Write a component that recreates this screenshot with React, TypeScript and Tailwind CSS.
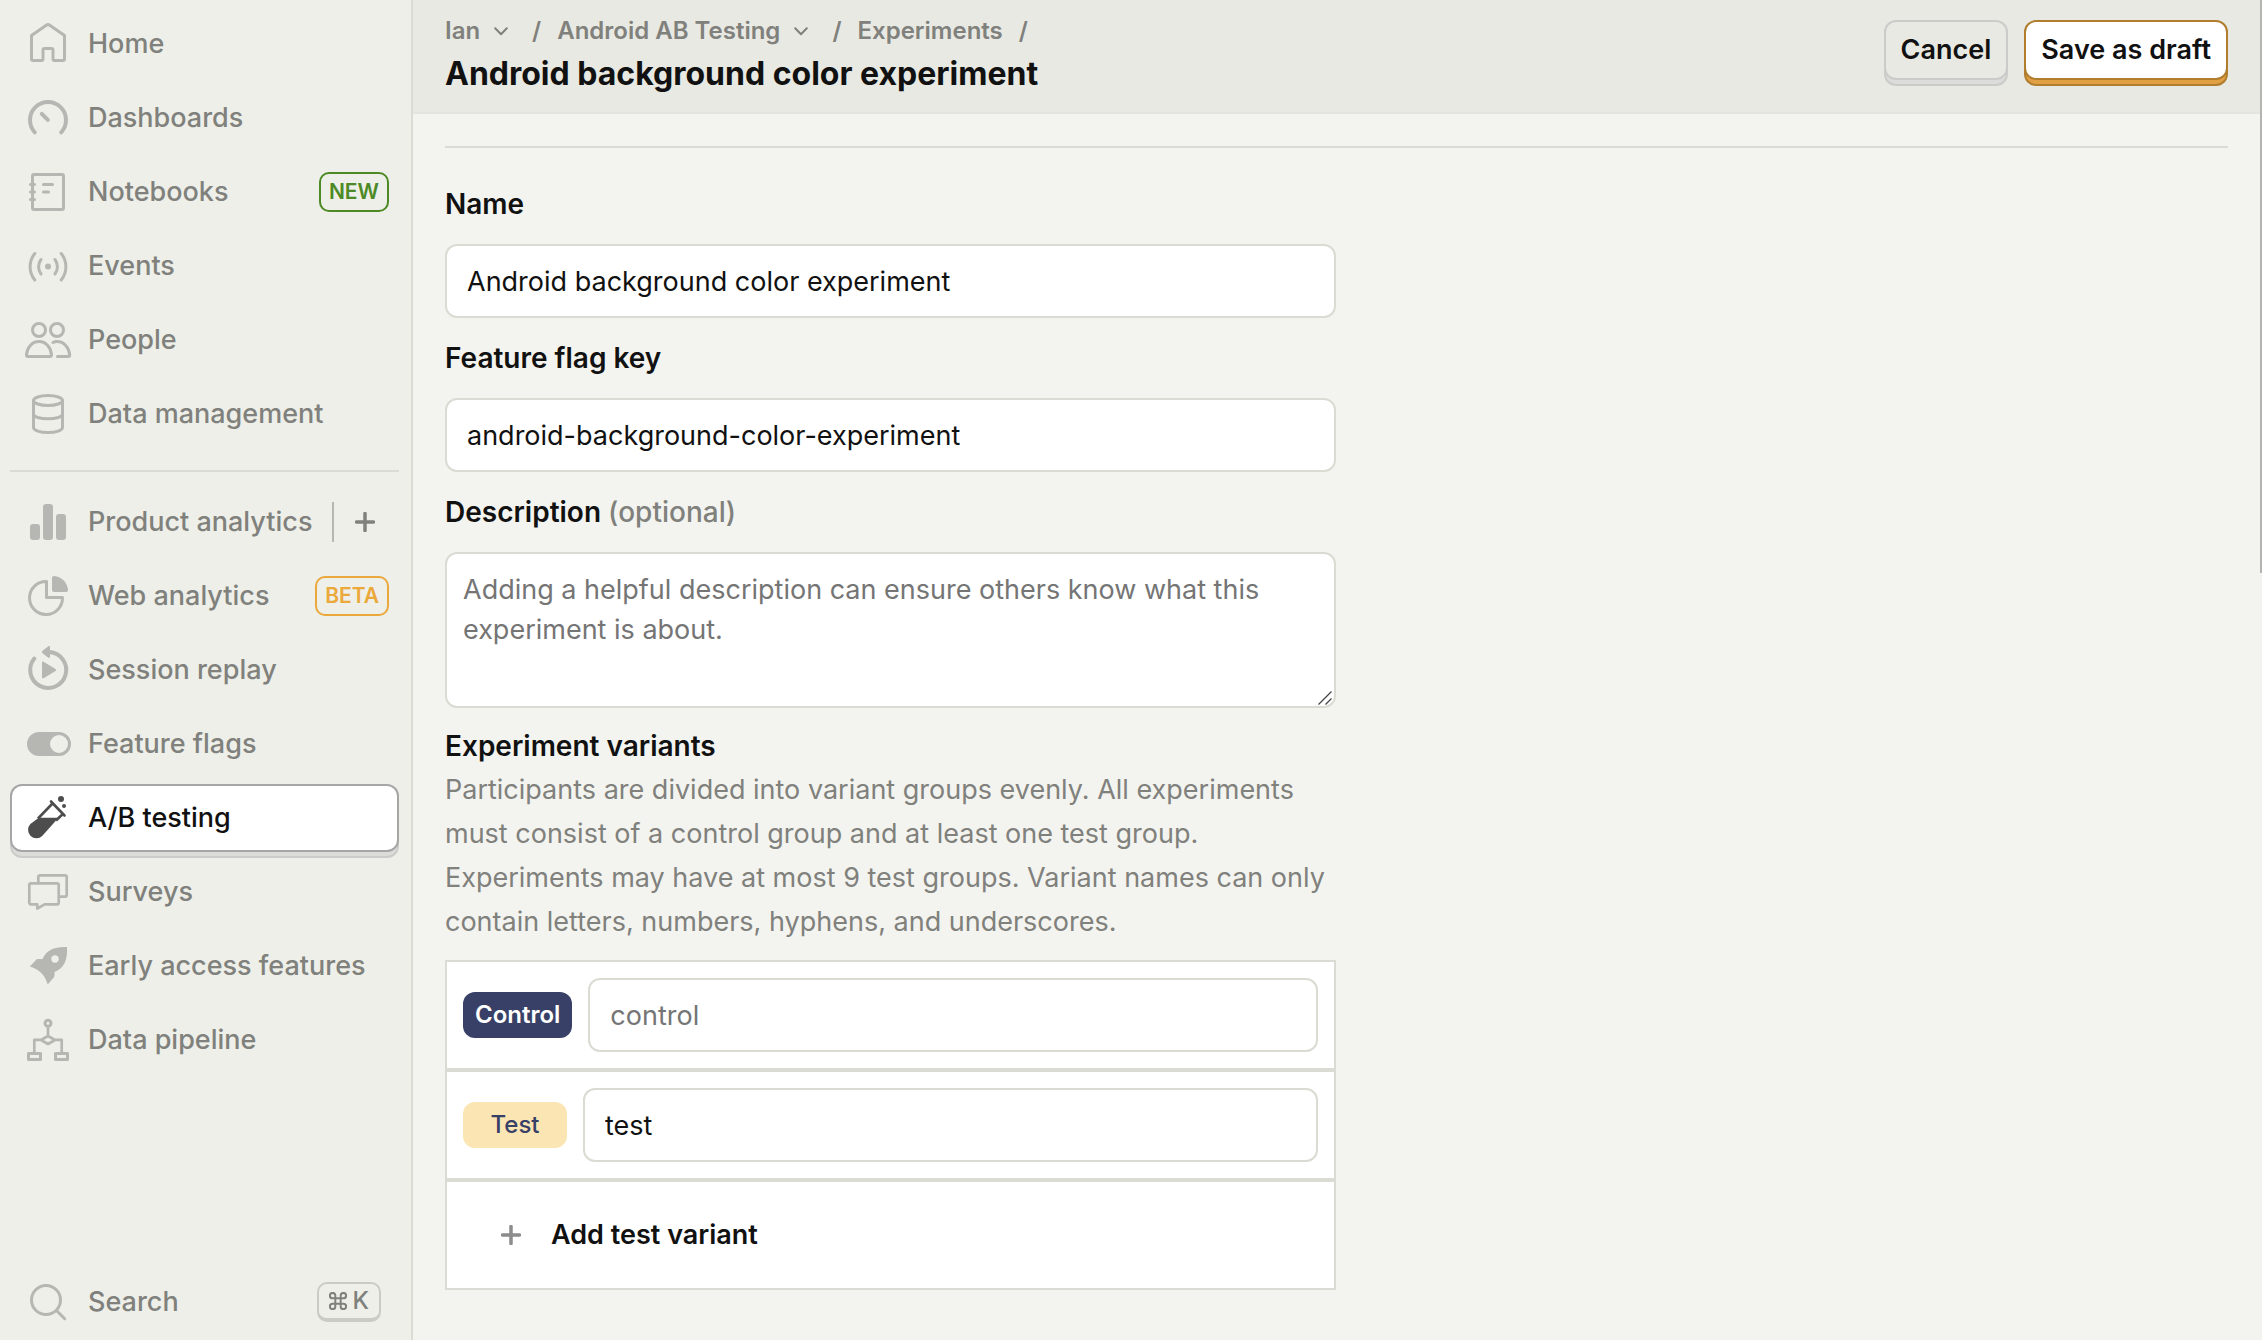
import React from "react";

type IconProps = { children: React.ReactNode };

function NavIcon({ children }: IconProps) {
  return (
    <svg
      viewBox="0 0 48 48"
      className="size-12 shrink-0"
      fill="none"
      stroke="currentColor"
      strokeWidth="3"
      strokeLinecap="round"
      strokeLinejoin="round"
      aria-hidden="true"
    >
      {children}
    </svg>
  );
}

const icons = {
  home: (
    <NavIcon>
      <path d="M7.5 15.5 22.6 5a2.4 2.4 0 0 1 2.8 0L40.5 15.5V39a1.500 1.500 0 0 1-1.5 1.5h-8.5a1.500 1.500 0 0 1-1.5-1.5v-9a1.500 1.500 0 0 0-1.5-1.5h-7a1.500 1.500 0 0 0-1.5 1.5v9a1.500 1.500 0 0 1-1.5 1.5H9A1.500 1.500 0 0 1 7.5 39z" />
    </NavIcon>
  ),
  dashboards: (
    <NavIcon>
      <path strokeWidth="4" d="M10.8 38.3a18 18 0 1 1 26.4 0M17.8 19.8l6 6" />
    </NavIcon>
  ),
  notebooks: (
    <NavIcon>
      <rect x="8.5" y="6.5" width="31" height="35" rx="1.5" />
      <path d="M6.5 16.5h4M6.5 24h4M6.5 31.5h4M19.5 16.5h9M19.5 24h5" />
    </NavIcon>
  ),
  events: (
    <NavIcon>
      <circle cx="24" cy="24.5" r="3" fill="currentColor" stroke="none" />
      <path d="M17 17.5a12 12 0 0 0 0 14.5M31 17.5a12 12 0 0 1 0 14.5M10.8 11.5a21 21 0 0 0 0 26.5M37.2 11.5a21 21 0 0 1 0 26.5" />
    </NavIcon>
  ),
  people: (
    <NavIcon>
      <circle cx="15" cy="14" r="6.5" />
      <circle cx="33" cy="14" r="6.5" />
      <path d="M2.5 38.800C3 31.5 8 25.5 15 25.5s12 6 12.5 13.3c0 1-.5 1.7-1.5 1.7H4c-1 0-1.5-.7-1.5-1.700zM29 26.5c1-.6 2.5-1 4-1 7 0 12 6 12.7 13.3 0 1-.5 1.7-1.5 1.7H33.5" />
    </NavIcon>
  ),
  database: (
    <NavIcon>
      <ellipse cx="24" cy="10.5" rx="14.5" ry="5" />
      <path d="M9.5 10.5v27c0 2.8 6.5 5 14.5 5s14.5-2.2 14.5-5v-27M9.5 24c0 2.8 6.5 4.8 14.5 4.8S38.5 26.8 38.5 24" />
    </NavIcon>
  ),
  bars: (
    <NavIcon>
      <g fill="currentColor" stroke="none">
        <rect x="6" y="26" width="10" height="16" rx="3" />
        <rect x="19" y="6" width="10" height="36" rx="3" />
        <rect x="32" y="16" width="10" height="26" rx="3" />
      </g>
    </NavIcon>
  ),
  pie: (
    <NavIcon>
      <path d="M22.5 9.5a16.5 16.5 0 1 0 16 16h-16z" />
      <path
        fill="currentColor"
        stroke="none"
        d="M28 6c0-1.3 1-2.2 2.3-2 7.4.8 12.9 6.3 13.7 13.7.1 1.3-.7 2.3-2 2.3H30a2 2 0 0 1-2-2z"
      />
    </NavIcon>
  ),
  replay: (
    <NavIcon>
      <path strokeWidth="4" d="M25.5 6A18 18 0 1 1 10.3 12.5" />
      <path
        fill="currentColor"
        stroke="none"
        d="M18.5 4.800 24 .4c.9-.7 2-.3 2 .8v9.600c0 1.100-1.100 1.500-2 .8l-5.500-4.400c-.8-.7-.8-1.700 0-2.400zM18 16.700c0-1 .7-1.400 1.500-1l12 7.200c.8.5.8 1.700 0 2.200l-12 7.200c-.8.4-1.500 0-1.500-1z"
      />
    </NavIcon>
  ),
  toggle: (
    <NavIcon>
      <path
        fill="currentColor"
        stroke="none"
        fillRule="evenodd"
        d="M15 12h20a12 12 0 0 1 0 24H15a12 12 0 0 1 0-24zm20 3a9 9 0 1 0 0 18 9 9 0 0 0 0-18z"
      />
    </NavIcon>
  ),
  tube: (
    <NavIcon>
      <path strokeWidth="2.6" d="m27 7.5 13.5 14" />
      <path strokeWidth="2.6" strokeLinecap="butt" d="M28.5 9.5 14 24.500M38.800 20 32 26.500" />
      <path
        fill="currentColor"
        stroke="none"
        d="M14.700 23.700H34.500L18.400 41.700a8.300 8.300 0 0 1-12-11.600z"
      />
      <circle cx="37" cy="5" r="3" fill="currentColor" stroke="none" />
      <circle cx="40" cy="12" r="2" fill="currentColor" stroke="none" />
    </NavIcon>
  ),
  surveys: (
    <NavIcon>
      <path
        strokeWidth="2.7"
        d="M14.3 15V9a1.700 1.700 0 0 1 1.700-1.700h25A1.700 1.700 0 0 1 42.700 9v18a1.700 1.700 0 0 1-1.700 1.700h-5.500M7 15.300h26a1.700 1.700 0 0 1 1.700 1.700v17.700a1.700 1.700 0 0 1-1.700 1.700H20.500l-7.200 4.200v-4.200H7a1.700 1.700 0 0 1-1.700-1.700V17A1.700 1.700 0 0 1 7 15.300z"
      />
    </NavIcon>
  ),
  rocket: (
    <NavIcon>
      <path
        fill="currentColor"
        stroke="none"
        fillRule="evenodd"
        d="M43 5c.3 10-.5 20-12.500 25 .1 2 0 4-.5 5.300L23.700 42.500c-1-3.500-2-5.500-3.600-8-2-3-3.600-4.500-6.500-6.500-2.500-1.600-4.600-2.500-7.800-3.500L12.700 17.300c1.500-.3 3.600-.3 5.600 0C22.500 7.500 31 4.500 43 5zM31 13.300a3.700 3.700 0 1 0 0 7.400 3.700 3.700 0 0 0 0-7.400z"
      />
    </NavIcon>
  ),
  pipeline: (
    <NavIcon>
      <circle cx="24" cy="7.3" r="3" />
      <path
        strokeWidth="2.7"
        d="M24 11v8.500M24 20l7 4-7 4-7-4zM17 23.800h-6.700V36M31 23.800h6.700V36"
      />
      <rect x="4.5" y="37.5" width="12" height="6" />
      <rect x="31.5" y="37.5" width="12" height="6" />
    </NavIcon>
  ),
  search: (
    <NavIcon>
      <circle cx="22" cy="22" r="14.5" />
      <path d="m32.7 32.7 8 8" />
    </NavIcon>
  ),
};

type NavItemProps = {
  icon: React.ReactNode;
  label: string;
  active?: boolean;
  children?: React.ReactNode;
};

function NavItem({ icon, label, active, children }: NavItemProps) {
  return (
    <li
      className={
        active
          ? "flex h-[68px] items-center rounded-xl border-2 border-[#a6a6a6] bg-white pr-2 pl-3 text-[#111] shadow-[0_6px_0_-2px_#dcdcdb,0_6px_0_0_#cbcbc9]"
          : "flex h-[68px] items-center rounded-xl border-2 border-transparent pr-2 pl-3 text-[#80817c]"
      }
    >
      <a href="#" className="flex min-w-0 items-center gap-4" aria-current={active ? "page" : undefined}>
        <span className={active ? "text-[#4d4d4d]" : "text-[#b6b7b2]"}>{icon}</span>
        <span className="whitespace-nowrap">{label}</span>
      </a>
      {children}
    </li>
  );
}

function PlusIcon({ className }: { className: string }) {
  return (
    <svg viewBox="0 0 20 20" className={className} stroke="currentColor" strokeWidth="3.5" strokeLinecap="round" aria-hidden="true">
      <path d="M10 1.5v17M1.5 10h17" />
    </svg>
  );
}

function Chevron() {
  return (
    <svg viewBox="0 0 14 9" className="h-[9px] w-[14px]" fill="none" stroke="currentColor" strokeWidth="2" strokeLinecap="round" strokeLinejoin="round" aria-hidden="true">
      <path d="m1.2 1.2 5.800 6 5.800-6" />
    </svg>
  );
}

function Sidebar() {
  return (
    <nav className="flex w-[413px] shrink-0 flex-col border-r-2 border-[#dadbd2] bg-[#eeefe9] pt-[10px] pr-3 pb-1 pl-[10px] text-[27px] leading-10 font-medium">
      <ul className="flex flex-col gap-1.5">
        <NavItem icon={icons.home} label="Home" />
        <NavItem icon={icons.dashboards} label="Dashboards" />
        <NavItem icon={icons.notebooks} label="Notebooks">
          <span className="ml-auto flex h-10 items-center rounded-[10px] border-2 border-[#4d8a26] px-2 text-[21px] font-semibold text-[#4d8a26]">
            NEW
          </span>
        </NavItem>
        <NavItem icon={icons.events} label="Events" />
        <NavItem icon={icons.people} label="People" />
        <NavItem icon={icons.database} label="Data management" />
      </ul>
      <hr className="mt-[22px] mb-4 border-t-2 border-[#dadbd2]" />
      <ul className="flex flex-col gap-1.5">
        <NavItem icon={icons.bars} label="Product analytics">
          <span className="ml-5 h-10 w-0.5 shrink-0 bg-[#b6b7b2]" />
          <button type="button" aria-label="New insight" className="ml-auto p-3.5">
            <PlusIcon className="size-5" />
          </button>
        </NavItem>
        <NavItem icon={icons.pie} label="Web analytics">
          <span className="ml-auto flex h-10 items-center rounded-[10px] border-2 border-[#eba83b] px-2 text-[21px] font-semibold text-[#eba83b]">
            BETA
          </span>
        </NavItem>
        <NavItem icon={icons.replay} label="Session replay" />
        <NavItem icon={icons.toggle} label="Feature flags" />
        <NavItem icon={icons.tube} label="A/B testing" active />
        <NavItem icon={icons.surveys} label="Surveys" />
        <NavItem icon={icons.rocket} label="Early access features" />
        <NavItem icon={icons.pipeline} label="Data pipeline" />
      </ul>
      <ul className="mt-auto">
        <NavItem icon={icons.search} label="Search">
          <kbd className="mr-2 ml-auto flex h-10 items-center gap-1.5 rounded-[10px] border-2 border-b-4 border-[#cacbc7] px-2.5 font-[Inter,sans-serif] text-[24px]">
            <svg viewBox="0 0 20 20" className="size-[18px]" fill="none" stroke="currentColor" strokeWidth="2.2" aria-hidden="true">
              <path d="M7 7V4a3 3 0 1 0-3 3h12a3 3 0 1 0-3-3v12a3 3 0 1 0 3-3H4a3 3 0 1 0 3 3z" />
            </svg>
            K
          </kbd>
        </NavItem>
      </ul>
    </nav>
  );
}

function Header() {
  return (
    <header className="flex h-[114px] shrink-0 items-start justify-between border-b-2 border-[#e4e5df] bg-[#e8e9e3] px-8">
      <div className="pt-[13px]">
        <nav aria-label="Breadcrumb" className="flex items-center text-[24px] leading-9 font-semibold text-[#80807c]">
          <button type="button" className="flex items-center gap-3.5">
            Ian <Chevron />
          </button>
          <span className="mr-4 ml-6">/</span>
          <button type="button" className="flex items-center gap-3.5">
            Android AB Testing <Chevron />
          </button>
          <span className="mr-4 ml-6">/</span>
          <a href="#">Experiments</a>
          <span className="mx-4">/</span>
        </nav>
        <h1 className="text-[32px] leading-[50px] font-bold text-[#111]">Android background color experiment</h1>
      </div>
      <div className="flex gap-4 pt-5 text-[27px] leading-10 font-semibold text-[#111]">
        <button
          type="button"
          className="h-[60px] rounded-xl border-2 border-[#cbcbc9] bg-[#e8e9e3] px-[15px] shadow-[0_6px_0_-2px_#dcdcdb,0_6px_0_0_#cbcbc9]"
        >
          Cancel
        </button>
        <button
          type="button"
          className="h-[60px] rounded-xl border-2 border-[#b17d2f] bg-white px-[15px] shadow-[0_6px_0_-2px_#e2a045,0_6px_0_0_#b17d2f]"
        >
          Save as draft
        </button>
      </div>
    </header>
  );
}

function TextField({ id, label, value }: { id: string; label: string; value: string }) {
  return (
    <div className="mb-5 flex flex-col gap-5">
      <label htmlFor={id} className="text-[28px] leading-10 font-semibold">
        {label}
      </label>
      <input
        id={id}
        defaultValue={value}
        className="h-[74px] w-full rounded-xl border-2 border-[#dadbd2] bg-white px-5"
      />
    </div>
  );
}

function ExperimentForm() {
  return (
    <form className="max-w-[891px] text-[27px] text-[#111]">
      <TextField id="name" label="Name" value="Android background color experiment" />
      <TextField id="flag-key" label="Feature flag key" value="android-background-color-experiment" />
      <div className="mb-[18px] flex flex-col gap-5">
        <label htmlFor="description" className="text-[28px] leading-10 font-semibold">
          Description <span className="font-medium text-[#80807c]">(optional)</span>
        </label>
        <div className="relative flex">
          <textarea
            id="description"
            placeholder="Adding a helpful description can ensure others know what this experiment is about."
            className="h-[156px] w-full resize-none rounded-xl border-2 border-[#dadbd2] bg-white p-4 leading-10 placeholder:text-[#757575]"
          />
          <svg viewBox="0 0 14 14" className="absolute right-1 bottom-[3px] size-3.5" stroke="#444" strokeWidth="1.3" aria-hidden="true">
            <path d="M.5 13.5 13.5.5M7.5 13.5l6-6" />
          </svg>
        </div>
      </div>
      <fieldset>
        <legend className="text-[28px] leading-10 font-semibold">Experiment variants</legend>
        <p className="mt-0.5 leading-[44px] text-[#80807c]">
          Participants are divided into variant groups evenly. All experiments must consist of a control group and at
          least one test group. Experiments may have at most 9 test groups. Variant names can only contain letters,
          numbers, hyphens, and underscores.
        </p>
        <div className="mt-4 border-2 border-[#dadbd2] bg-white">
          <div className="flex items-center gap-4 border-b-4 border-[#dadbd2] p-4">
            <label htmlFor="variant-control" className="rounded-xl bg-[#384067] px-3 text-[24px] leading-[46px] font-semibold text-white">
              Control
            </label>
            <input
              id="variant-control"
              placeholder="control"
              className="h-[74px] min-w-0 flex-1 rounded-xl border-2 border-[#dadbd2] px-5 placeholder:text-[#757575]"
            />
          </div>
          <div className="flex items-center gap-4 border-b-4 border-[#dadbd2] p-4">
            <label htmlFor="variant-test" className="w-[104px] rounded-xl bg-[#fbe5b3] text-center text-[24px] leading-[46px] font-medium text-[#384067]">
              Test
            </label>
            <input
              id="variant-test"
              defaultValue="test"
              className="h-[74px] min-w-0 flex-1 rounded-xl border-2 border-[#dadbd2] px-5"
            />
          </div>
          <div className="flex h-[106px] items-center px-4">
            <button type="button" className="flex items-center gap-[30px] px-[38px] font-semibold">
              <PlusIcon className="size-5 text-[#8c8c8c]" />
              Add test variant
            </button>
          </div>
        </div>
      </fieldset>
    </form>
  );
}

export default function App() {
  return (
    <div className="flex h-screen overflow-hidden bg-[#f3f4ef] font-[Inter,sans-serif]">
      <Sidebar />
      <main className="flex min-w-0 flex-1 flex-col">
        <Header />
        <div className="px-8">
          <hr className="mt-8 mb-9 border-t-2 border-[#dadbd2]" />
          <ExperimentForm />
        </div>
      </main>
      <div className="h-[573px] w-0.5 shrink-0 bg-[#b4b5b0]" />
    </div>
  );
}
